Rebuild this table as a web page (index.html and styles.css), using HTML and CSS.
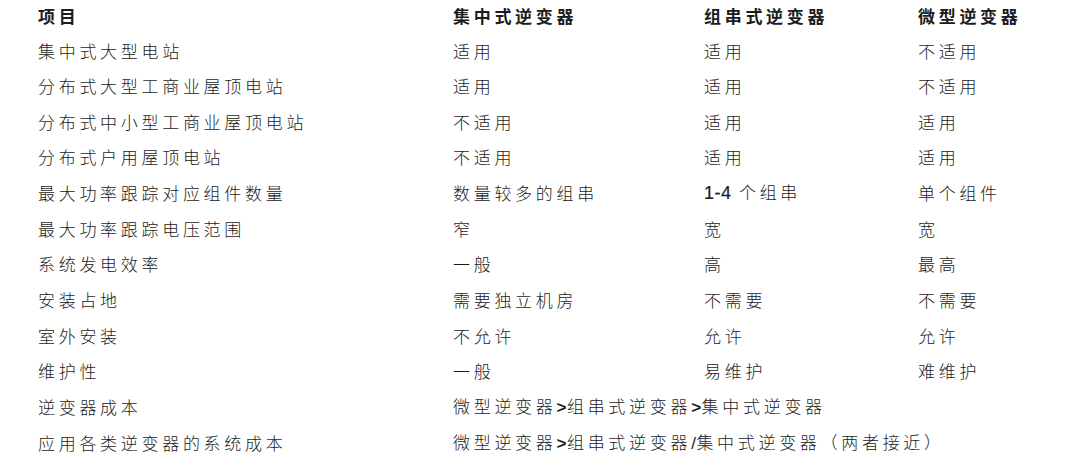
FILE: index.html
```html
<!DOCTYPE html>
<html lang="zh">
<head>
<meta charset="utf-8">
<link rel="stylesheet" href="styles.css">
</head>
<body>
<div class="table">
  <div class="row head"><span>项目</span><span>集中式逆变器</span><span>组串式逆变器</span><span>微型逆变器</span></div>
  <div class="row"><span>集中式大型电站</span><span>适用</span><span>适用</span><span>不适用</span></div>
  <div class="row"><span>分布式大型工商业屋顶电站</span><span>适用</span><span>适用</span><span>不适用</span></div>
  <div class="row"><span>分布式中小型工商业屋顶电站</span><span>不适用</span><span>适用</span><span>适用</span></div>
  <div class="row"><span>分布式户用屋顶电站</span><span>不适用</span><span>适用</span><span>适用</span></div>
  <div class="row"><span>最大功率跟踪对应组件数量</span><span>数量较多的组串</span><span><b class="num">1-4</b> 个组串</span><span>单个组件</span></div>
  <div class="row"><span>最大功率跟踪电压范围</span><span>窄</span><span>宽</span><span>宽</span></div>
  <div class="row"><span>系统发电效率</span><span>一般</span><span>高</span><span>最高</span></div>
  <div class="row"><span>安装占地</span><span>需要独立机房</span><span>不需要</span><span>不需要</span></div>
  <div class="row"><span>室外安装</span><span>不允许</span><span>允许</span><span>允许</span></div>
  <div class="row"><span>维护性</span><span>一般</span><span>易维护</span><span>难维护</span></div>
  <div class="row"><span>逆变器成本</span><span class="wide">微型逆变器<i class="sym">&gt;</i>组串式逆变器<i class="sym">&gt;</i>集中式逆变器</span></div>
  <div class="row"><span>应用各类逆变器的系统成本</span><span class="wide">微型逆变器<i class="sym">&gt;</i>组串式逆变器<i class="sym slash">/</i>集中式逆变器（两者接近）</span></div>
</div>
</body>
</html>
```
FILE: styles.css
```css
html, body {
  margin: 0;
  padding: 0;
  background: #ffffff;
}
body {
  width: 1080px;
  height: 456px;
  overflow: hidden;
  font-family: "Noto Sans CJK SC", "Noto Sans", sans-serif;
  color: #1c1c1c;
}
.table {
  display: flex;
  flex-direction: column;
  padding: 0 0 0 38px;
  margin-top: -2px;
}
.row {
  display: grid;
  grid-template-columns: 415px 251px 214px 1fr;
  height: 35.65px;
  align-items: center;
  font-size: 17px;
  letter-spacing: 3.7px;
  line-height: 1;
  white-space: nowrap;
  font-weight: 300;
}
.row.head {
  font-weight: 700;
  height: 34.2px;
}
.wide {
  grid-column: 2 / 5;
}
.num {
  font-family: "Liberation Sans", Arial, sans-serif;
  font-weight: 400;
  font-size: 18px;
  letter-spacing: 0.5px;
  -webkit-text-stroke: 0.2px #1c1c1c;
}
.sym {
  font-style: normal;
  font-family: "Liberation Sans", Arial, sans-serif;
  font-weight: 700;
  letter-spacing: 0.5px;
}
.sym.slash {
  font-weight: 400;
}
```
